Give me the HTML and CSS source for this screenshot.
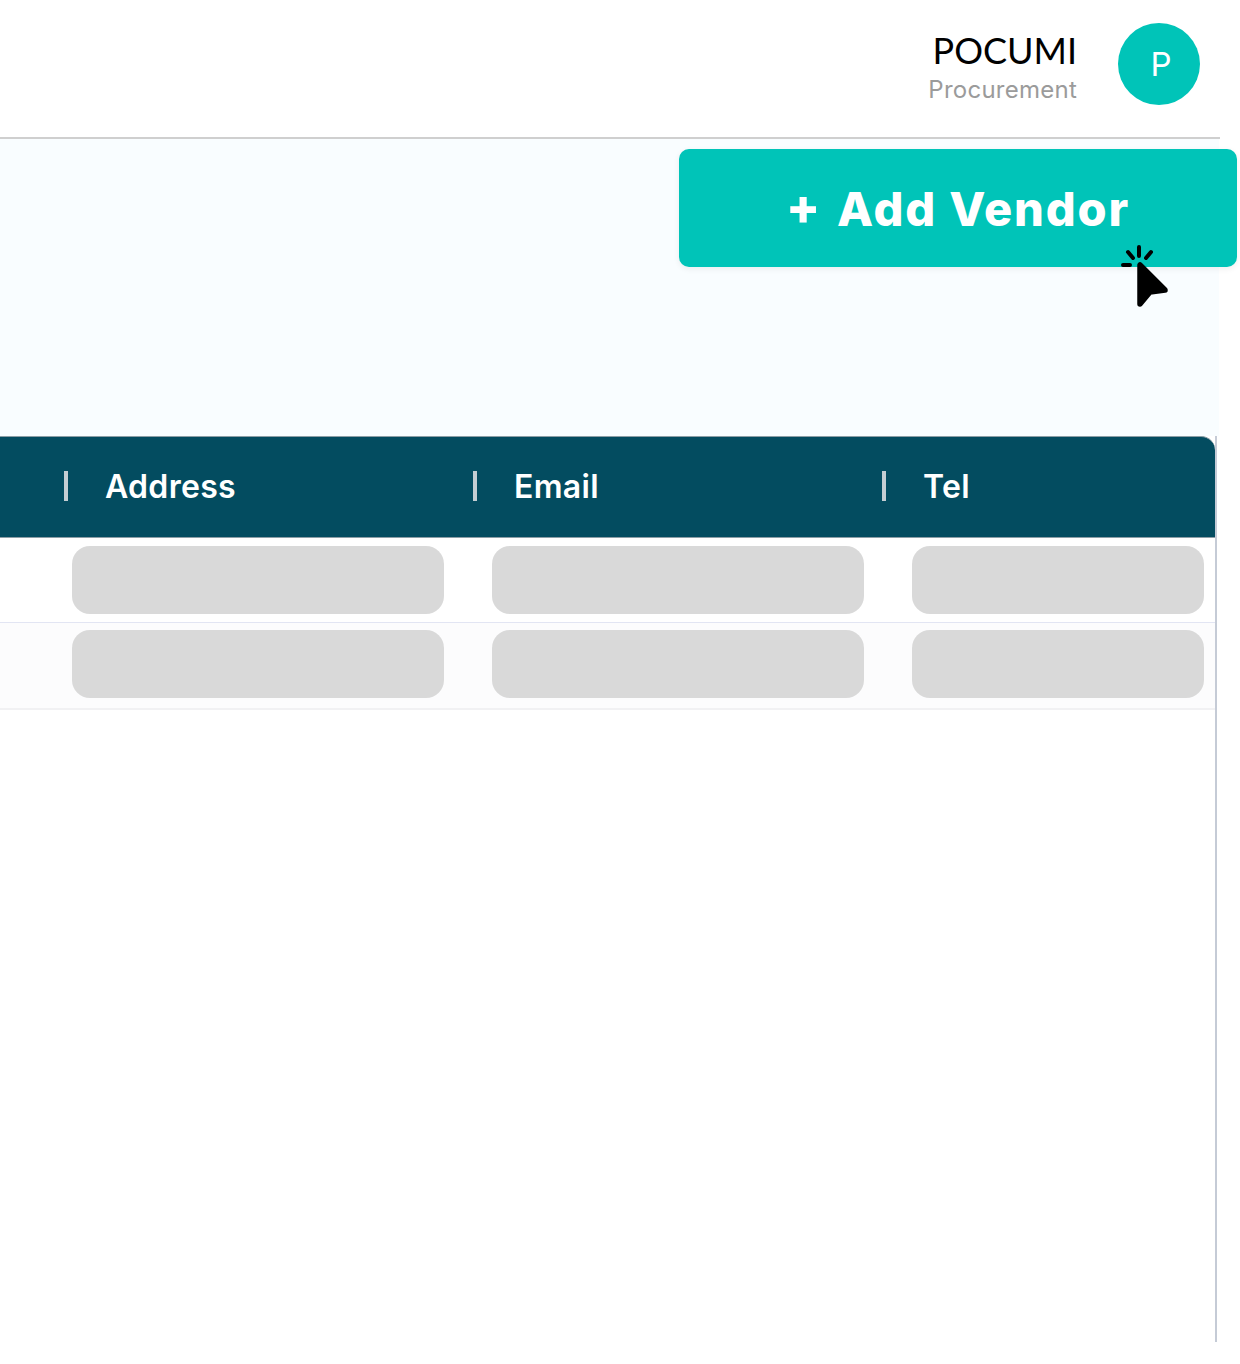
FILE: index.html
```html
<!DOCTYPE html>
<html lang="en">
<head>
  <meta charset="UTF-8">
  <meta name="viewport" content="width=device-width, initial-scale=1.0">
  <title>Vendors</title>
  <link rel="stylesheet" href="styles.css">
</head>
<body>
<div class="page">
  <header class="topbar">
    <div class="user-info">
      <div class="user-name">POCUMI</div>
      <div class="user-role">Procurement</div>
    </div>
    <div class="avatar">P</div>
  </header>

  <section class="toolbar">
    <button type="button" class="add-btn"><span class="plus">+</span><span>Add Vendor</span></button>
    <!-- pointeur -->
    <svg class="pointer" width="50" height="64" viewBox="0 0 50 64" fill="none" stroke="#000" stroke-linecap="round" stroke-linejoin="round">
      <path d="M20 21V60L30 48L45 46Z" fill="#000" stroke-width="5.5"/>
      <path d="M19 3V12M8 8L13 14M31 8L26 14M3 21H10" stroke-width="4"/>
    </svg>
  </section>

  <section class="table">
    <div class="thead">
      <div class="th th-wide"><span class="sep"></span>Address</div>
      <div class="th th-wide"><span class="sep"></span>Email</div>
      <div class="th th-last"><span class="sep"></span>Tel</div>
    </div>
    <div class="row">
      <div class="skel"></div>
      <div class="skel"></div>
      <div class="skel skel-short"></div>
    </div>
    <div class="row row-alt">
      <div class="skel"></div>
      <div class="skel"></div>
      <div class="skel skel-short"></div>
    </div>
  </section>
</div>
</body>
</html>
```

FILE: styles.css
```css
body { margin: 0; background: #fff; font-family: Inter, Arial, sans-serif; }
.page { width: 1220px; }

.topbar {
  display: flex;
  justify-content: flex-end;
  align-items: center;
  gap: 41px;
  height: 127px;
  padding: 0 20px 10px 0;
  border-bottom: 2px solid #cfcfcf;
  box-sizing: content-box;
}
.user-info { text-align: right; padding-top: 7px; }
.user-name { font-family: Lato, Inter, sans-serif; font-size: 36px; line-height: 42px; color: #000; }
.user-role { margin-top: 4px; font-size: 24px; line-height: 30px; letter-spacing: 0.25px; color: #9b9b9b; }
.avatar {
  width: 82px;
  height: 82px;
  padding-left: 4px;
  box-sizing: border-box;
  border-radius: 50%;
  background: #00c4b8;
  color: #fff;
  font-size: 33px;
  display: flex;
  align-items: center;
  justify-content: center;
}

.toolbar {
  position: relative;
  display: flex;
  justify-content: flex-end;
  align-items: flex-start;
  width: 1219px;
  height: 297px;
  padding-top: 10px;
  box-sizing: border-box;
  background: #f9fdff;
}
.add-btn {
  display: flex;
  align-items: center;
  justify-content: center;
  gap: 15px;
  flex: none;
  width: 558px;
  height: 118px;
  margin-right: -18px;
  padding: 0;
  border: none;
  border-radius: 10px;
  background: #00c4b8;
  color: #fff;
  font-family: Inter, Arial, sans-serif;
  font-size: 47px;
  font-weight: 800;
  letter-spacing: 1.8px;
  box-shadow: 0 2px 6px #0001;
}
.plus { font-size: 50px; line-height: 1; margin-top: -4px; }
.pointer { position: absolute; top: 105px; right: 49px; }

.table {
  width: 1217px;
  height: 906px;
  box-sizing: border-box;
  border-right: 2px solid #c5cbd6;
}
.thead {
  display: flex;
  justify-content: flex-end;
  height: 102px;
  padding-bottom: 2px;
  box-sizing: border-box;
  background: #034c60;
  border-top: 1px solid #8c9ea6;
  border-bottom: 1px solid #8c9ea6;
  border-top-right-radius: 14px;
  color: #fff;
  font-size: 32px;
  font-weight: 600;
  letter-spacing: 0.3px;
}
.th { display: flex; align-items: center; box-sizing: border-box; }
.th-wide { width: 409px; }
.th-last { width: 332px; }
.sep { width: 4px; height: 30px; margin: 0 37px 0 -1px; background: #c4ced3; }

.row {
  display: flex;
  justify-content: flex-end;
  gap: 48px;
  height: 85px;
  padding: 8px 11px 0 0;
  box-sizing: border-box;
  border-bottom: 1px solid #e2e5f3;
}
.row-alt { height: 87px; padding-top: 7px; background: #fcfcfd; border-bottom: 2px solid #f1f1f3; }
.skel { width: 372px; height: 68px; border-radius: 18px; background: #d9d9d9; }
.skel-short { width: 292px; }
```
